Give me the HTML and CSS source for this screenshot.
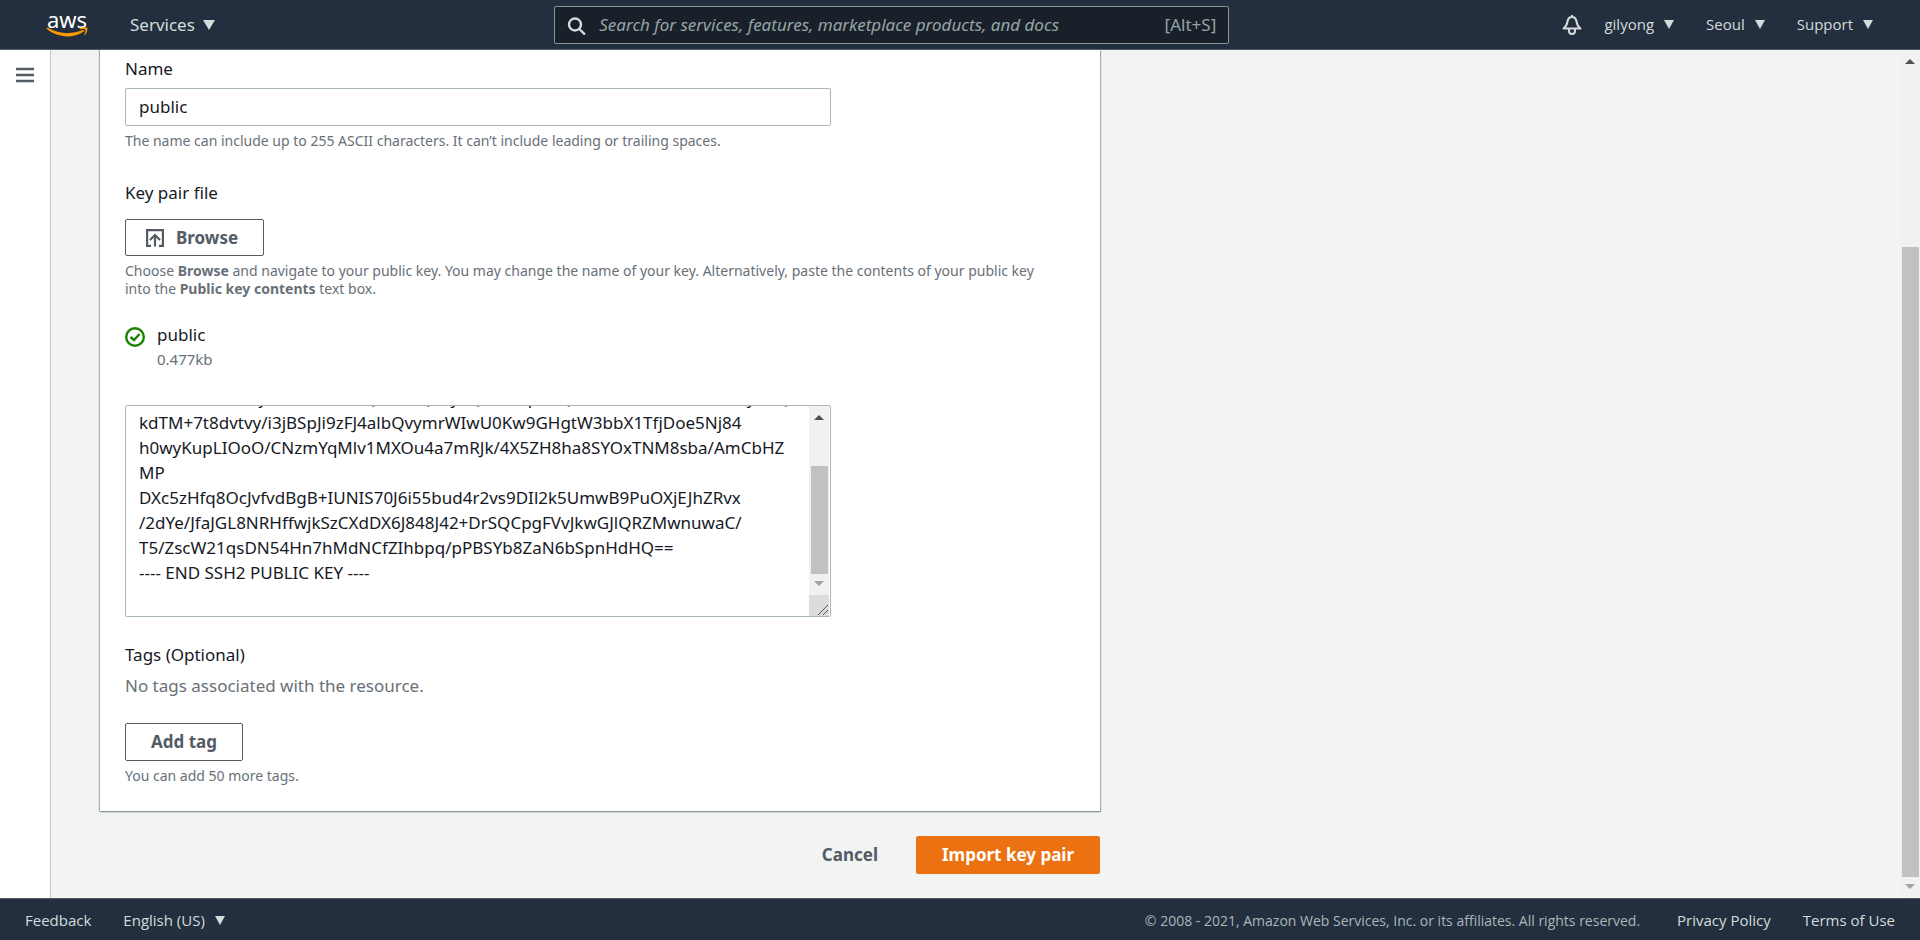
FILE: index.html
```html
<!DOCTYPE html>
<html lang="en">
<head>
  <meta charset="UTF-8" />
  <meta name="viewport" content="width=device-width, initial-scale=1" />
  <title>Import key pair | EC2 Management Console</title>
  <link rel="stylesheet" href="styles.css">
</head>
<body>

  <header class="topbar">
    <div class="topbar-left">
      <a class="logo" href="#" aria-label="aws">
        <span class="logo-text">aws</span>
        <svg class="logo-smile" width="42" height="11" viewBox="0 0 42 11">
          <path d="M0.5 1.2C0.8 0.6 1.5 0.7 2.2 1.1C13.5 7.4 26 7.5 36.8 3.1C37.9 2.7 38.7 3.7 37.7 4.4C27 12 11.500 10.700 0.900 2.100C0.500 1.800 0.300 1.500 0.500 1.200Z" fill="#f90" />
          <path d="M33.800 1.300C36 -0.100 40.500 -0.100 41.200 0.700C41.900 1.600 41 6 38.900 7.900C38.500 8.200 38.100 8 38.300 7.500C39 5.800 39.800 3.400 39.300 2.700C38.800 2 36.100 2 34.200 2.200C33.600 2.200 33.300 1.700 33.800 1.300Z" fill="#f90" />
        </svg>
      </a>
      <button class="menu menu-big">Services <i class="caret"></i></button>
    </div>

    <div class="search">
      <svg width="20" height="20" viewBox="0 0 20 20" fill="none" stroke="#d5dbdb" stroke-width="2.400">
        <circle cx="8" cy="9.500" r="6" />
        <path d="M12.300 14L18 19.500" />
      </svg>
      <input type="text" aria-label="Search" placeholder="Search for services, features, marketplace products, and docs" />
      <span>[Alt+S]</span>
    </div>

    <div class="topbar-right">
      <button class="bell" aria-label="Notifications">
        <svg width="20" height="20" viewBox="0 0 20 20" fill="none" stroke="#d5dbdb" stroke-width="2" stroke-linejoin="round">
          <path d="M10 0V2M1.500 13.500H18.500C15.500 11.500 15 9.500 14.500 6.500C14 3.500 12 2 10 2C8 2 6 3.500 5.500 6.500C5 9.500 4.500 11.500 1.500 13.500Z" />
          <path d="M7 14V16A3 3 0 0 0 13 16V14" />
        </svg>
      </button>
      <button class="menu">gilyong <i class="caret"></i></button>
      <button class="menu">Seoul <i class="caret"></i></button>
      <button class="menu">Support <i class="caret"></i></button>
    </div>
  </header>

  <div class="main">
    <aside class="sidebar">
      <button aria-label="Open navigation">
        <svg width="18" height="16" viewBox="0 0 18 16" stroke="#545b64" stroke-width="2.500">
          <path d="M0 2H18M0 8H18M0 14H18" />
        </svg>
      </button>
    </aside>

    <main class="content">
      <form>
        <section class="card">
          <label class="label" for="name">Name</label>
          <input class="text-input" id="name" type="text" value="public" />
          <p class="hint">The name can include up to 255 ASCII characters. It can’t include leading or trailing spaces.</p>

          <h3 class="label label-file">Key pair file</h3>
          <button class="btn btn-browse" type="button">
            <svg width="18" height="18" viewBox="0 0 18 18" fill="none" stroke="#545b64" stroke-width="2.200">
              <path d="M5 16.900H1.100V1.100H16.900V16.900H13" />
              <path d="M9 17.500V6.500M4 11L9 6L14 11" />
            </svg>
            Browse
          </button>
          <p class="hint">Choose <b>Browse</b> and navigate to your public key. You may change the name of your key. Alternatively, paste the contents of your public key into the <b>Public key contents</b> text box.</p>

          <div class="file">
            <svg width="20" height="20" viewBox="0 0 20 20" fill="none" stroke="#1d8102" stroke-width="2.400">
              <circle cx="10" cy="10" r="8.800" />
              <path d="M5.500 10L9 13L14.500 7" />
            </svg>
            <div>
              <p class="file-name">public</p>
              <p class="file-size">0.477kb</p>
            </div>
          </div>

          <div class="key-box">
            <textarea id="key" aria-label="Public key contents">
---- BEGIN SSH2 PUBLIC KEY ----
Comment: "imported-openssh-key"
AAAAB3NzaC1yc2EAAAADAQABAAABAQCm0e
Vb7cMuXw2HnjKz0RLtWd8aQBn4hQE7yvQh2mRp8nQnW4cZkVbT0sLxMd6hyo7Q
kdTM+7t8dvtvy/i3jBSpJi9zFJ4albQvymrWIwU0Kw9GHgtW3bbX1TfjDoe5Nj84
h0wyKupLIOoO/CNzmYqMlv1MXOu4a7mRJk/4X5ZH8ha8SYOxTNM8sba/AmCbHZ
MP
DXc5zHfq8OcJvfvdBgB+IUNIS70J6i55bud4r2vs9DIl2k5UmwB9PuOXjEJhZRvx
/2dYe/JfaJGL8NRHffwjkSzCXdDX6J848J42+DrSQCpgFVvJkwGJlQRZMwnuwaC/
T5/ZscW21qsDN54Hn7hMdNCfZIhbpq/pPBSYb8ZaN6bSpnHdHQ==
---- END SSH2 PUBLIC KEY ----
</textarea>
            <div class="scrollbar">
              <i class="arrow-up"></i>
              <div class="track"><div class="thumb thumb-key"></div></div>
              <i class="arrow-down"></i>
              <svg class="grip" width="20" height="21" viewBox="0 0 20 21" stroke="#545454">
                <path d="M9 20L19 10M14 20L19 15" />
              </svg>
            </div>
          </div>

          <h3 class="label label-tags">Tags (Optional)</h3>
          <p class="no-tags">No tags associated with the resource.</p>
          <button class="btn" type="button">Add tag</button>
          <p class="hint">You can add 50 more tags.</p>
        </section>

        <div class="actions">
          <button class="btn btn-link" type="button">Cancel</button>
          <button class="btn btn-primary" type="submit">Import key pair</button>
        </div>
      </form>
    </main>

    <div class="scrollbar">
      <i class="arrow-up"></i>
      <div class="track"><div class="thumb thumb-page"></div></div>
      <i class="arrow-down"></i>
    </div>
  </div>

  <footer class="footer">
    <a href="#">Feedback</a>
    <button class="menu">English (US) <i class="caret"></i></button>
    <p>© 2008 - 2021, Amazon Web Services, Inc. or its affiliates. All rights reserved.</p>
    <a href="#">Privacy Policy</a>
    <a href="#">Terms of Use</a>
  </footer>

  <script>
    // show the end of the key
    const key = document.getElementById("key");
    key.scrollTop = key.scrollHeight;
  </script>
</body>
</html>
```
FILE: styles.css
```css
:root {
  --navy: #232f3e;
  --nav-text: #d5dbdb;
  --text: #16191f;
  --muted: #687078;
  --grey: #545b64;
  --input-border: #aab7b8;
  --page-bg: #f2f3f3;
  --orange: #ec7211;
  --nav-font: "Open Sans", "Noto Sans", sans-serif;
}

* {
  box-sizing: border-box;
}

body {
  display: flex;
  flex-direction: column;
  height: 100vh;
  margin: 0;
  overflow: hidden;
  font-family: "Noto Sans", sans-serif;
  font-size: 17px;
  line-height: 25px;
  color: var(--text);
  background-color: var(--page-bg);
}

p, h3 {
  margin: 0;
}

button, input, textarea {
  font: inherit;
  color: inherit;
}

button {
  padding: 0;
  border: none;
  background: none;
  cursor: pointer;
}

svg {
  flex: none;
}

/* top bar */
.topbar {
  display: flex;
  align-items: center;
  flex: none;
  height: 50px;
  padding: 0 47px 0 46px;
  background-color: var(--navy);
  border-bottom: 1px solid var(--grey);
  color: var(--nav-text);
}

.topbar-left, .topbar-right {
  display: flex;
  align-items: center;
}

.topbar-left {
  flex: 15;
  gap: 42px;
}

.topbar-right {
  flex: 19;
  justify-content: flex-end;
  gap: 32px;
}

.logo {
  display: flex;
  flex-direction: column;
  align-items: center;
  color: #fff;
  text-decoration: none;
}

.logo-text {
  font-size: 22px;
  line-height: 16px;
}

.menu {
  display: flex;
  align-items: center;
  gap: 10px;
  font-family: var(--nav-font);
  font-size: 15px;
  white-space: nowrap;
}

.menu-big {
  gap: 8px;
  font-family: inherit;
  font-size: 17px;
}

.caret {
  border: 5px solid transparent;
  border-top: 9px solid var(--nav-text);
  border-bottom: none;
}

.menu-big .caret {
  border-width: 10px 6px 0;
}

.bell {
  display: flex;
  margin-right: -10px;
}

.search {
  display: flex;
  align-items: center;
  width: 675px;
  height: 38px;
  padding: 0 12px;
  gap: 12px;
  background-color: #1a2029;
  border: 1px solid #879596;
  border-radius: 2px;
  color: #95a5a6;
}

.search input {
  flex: 1;
  min-width: 0;
  padding: 0;
  border: none;
  outline: none;
  background: none;
}

.search input::placeholder {
  color: #95a5a6;
  font-style: italic;
}

/* page */
.main {
  display: flex;
  flex: 1;
  min-height: 0;
}

.sidebar {
  flex: none;
  width: 51px;
  padding: 17px 16px;
  background-color: #fff;
  border-right: 1px solid #bfc6c6;
}

.sidebar button {
  display: flex;
}

.content {
  flex: 1;
  padding-left: 49px;
  overflow: hidden;
}

.content form {
  max-width: 1000px;
}

.card {
  padding: 6px 25px 26px;
  background-color: #fff;
  box-shadow: 0 1px 1px #879596, 1px 1px 1px rgba(0, 28, 36, 0.3), -1px 0 1px rgba(0, 28, 36, 0.3);
}

.label {
  display: block;
  font-size: 17px;
  font-weight: 400;
}

.text-input {
  display: block;
  width: 706px;
  max-width: 100%;
  height: 38px;
  margin-top: 7px;
  padding: 0 13px 2px;
  border: 1px solid var(--input-border);
  border-radius: 2px;
}

.hint {
  max-width: 925px;
  margin-top: 6px;
  font-size: 14px;
  line-height: 18px;
  color: var(--muted);
}

.label-file {
  margin: 30px 0 14px;
}

.btn {
  display: flex;
  align-items: center;
  height: 38px;
  padding: 0 25px 2px;
  border: 1px solid var(--grey);
  border-radius: 2px;
  background-color: #fff;
  color: var(--grey);
  font-weight: 700;
}

.btn-browse {
  gap: 12px;
  height: 37px;
  padding: 0 25px 0 20px;
}

.file {
  display: flex;
  gap: 12px;
  margin-top: 24px;
}

.file svg {
  margin-top: 5px;
}

.file-size {
  font-size: 15px;
  color: var(--muted);
}

.key-box {
  display: flex;
  width: 706px;
  max-width: 100%;
  height: 212px;
  margin-top: 33px;
  padding-right: 1px;
  border: 1px solid var(--input-border);
  border-radius: 2px;
}

.key-box textarea {
  flex: 1;
  min-width: 0;
  padding: 6px 13px;
  border: none;
  outline: none;
  resize: none;
  white-space: pre;
  overflow-x: hidden;
  scrollbar-width: none;
}

.label-tags {
  margin: 25px 0 6px;
}

.no-tags {
  margin-bottom: 25px;
  color: var(--muted);
}

.actions {
  display: flex;
  justify-content: flex-end;
  gap: 12px;
  margin-top: 25px;
}

.btn-link {
  border-color: transparent;
  background: none;
}

.btn-primary {
  border-color: var(--orange);
  background-color: var(--orange);
  color: #fff;
}

/* scrollbars */
.scrollbar {
  display: flex;
  flex-direction: column;
  align-items: center;
  flex: none;
  width: 20px;
  padding-top: 9px;
  background-color: #f1f1f1;
}

.arrow-up, .arrow-down {
  border: 5px solid transparent;
}

.arrow-up {
  border-top: none;
  border-bottom-color: #505050;
}

.arrow-down {
  margin-bottom: 9px;
  border-bottom: none;
  border-top-color: #a3a3a3;
}

.track {
  display: flex;
  flex-direction: column;
  justify-content: flex-end;
  flex: 1;
  padding-bottom: 7px;
}

.thumb {
  width: 17px;
  background-color: #c1c1c1;
}

.thumb-key {
  height: 70%;
}

.thumb-page {
  height: 77.5%;
}

.grip {
  background-color: #dcdcdc;
}

/* footer */
.footer {
  display: flex;
  align-items: center;
  flex: none;
  gap: 32px;
  height: 42px;
  padding: 2px 25px 0;
  border-top: 1px solid var(--grey);
  background-color: var(--navy);
  color: var(--nav-text);
  font-family: var(--nav-font);
  font-size: 15px;
}

.footer a {
  color: inherit;
  text-decoration: none;
}

.footer p {
  margin-left: auto;
  margin-right: 5px;
  font-size: 14px;
  color: #aab7b8;
}
```
